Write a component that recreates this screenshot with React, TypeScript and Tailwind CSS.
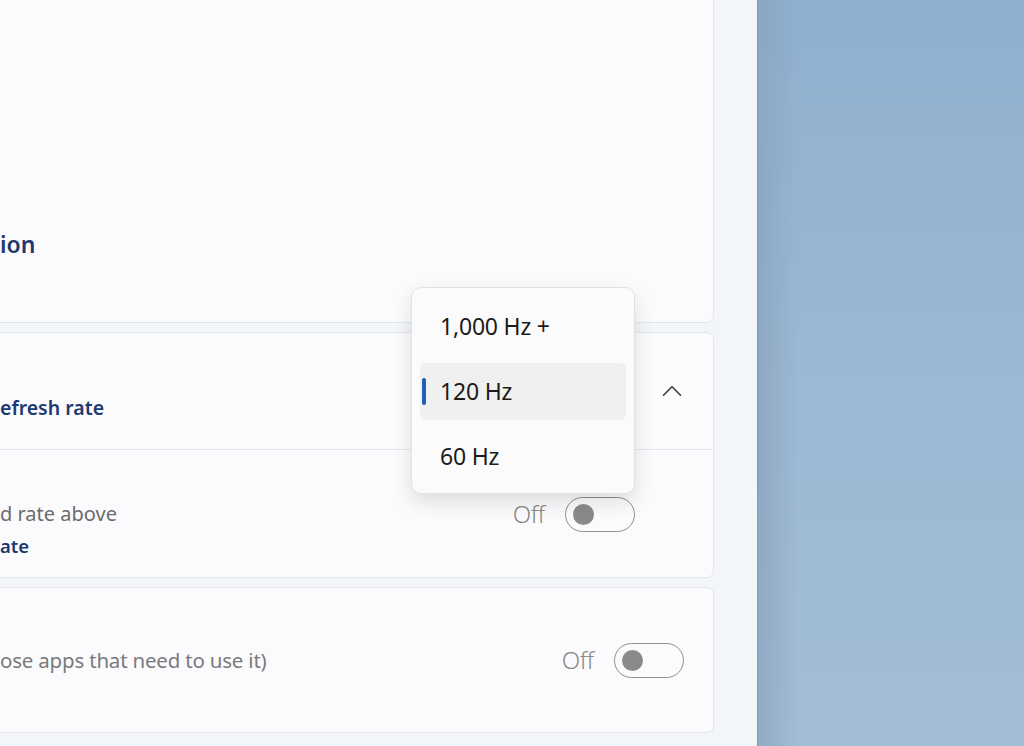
import { ChevronUp } from "lucide-react";

function Toggle() {
  return (
    <div className="w-[70px] h-[35px] rounded-full border-[1.5px] border-[#8f8f8f] bg-[#fbfbfb] flex items-center pl-[7px]">
      <div className="w-[21px] h-[21px] rounded-full bg-[#8a8a8a]" />
    </div>
  );
}

function OffSwitch() {
  return (
    <div className="flex items-center gap-[20px]">
      <span className="text-[24px] font-light text-[#8a8a8a] tracking-[-0.3px]">Off</span>
      <Toggle />
    </div>
  );
}

export default function App() {
  return (
    <div
      className="relative w-[1024px] h-[746px] overflow-hidden flex bg-[#f1f4f8]"
      style={{ fontFamily: '"Noto Sans", "Open Sans", sans-serif' }}
    >
      {/* settings window */}
      <div className="w-[757px] h-full flex flex-col gap-[9px] bg-[#f2f5f9]">
        <div className="w-[714px] h-[323px] shrink-0 bg-[#fbfbfd] border-r border-b border-[#e3e7ec] rounded-br-[7px] flex items-start pt-[226px]">
          <span className="text-[23px] font-semibold text-[#1d3a70] leading-[36px]">ion</span>
        </div>

        <div className="w-[714px] h-[246px] shrink-0 bg-[#fbfbfd] border-y border-r border-[#e3e7ec] rounded-r-[7px] flex flex-col">
          <div className="h-[117px] flex items-center justify-between border-b border-[#e3e7ec] pr-[24px]">
            <span className="text-[19.5px] font-semibold text-[#1d3a70] mt-[34px]">efresh rate</span>
            <ChevronUp className="w-[34px] h-[34px] text-[#3a3a3a]" strokeWidth={1.1} />
          </div>
          <div className="flex-1 flex items-start justify-between pr-[78px] pt-[48px]">
            <div className="flex flex-col">
              <span className="text-[20px] text-[#6b6b6b] leading-[32px]">d rate above</span>
              <span className="text-[18.5px] font-semibold text-[#1d3a70] leading-[32px]">ate</span>
            </div>
            <div className="-mt-[2px]">
              <OffSwitch />
            </div>
          </div>
        </div>

        <div className="w-[714px] h-[146px] shrink-0 bg-[#fbfbfd] border-y border-r border-[#e3e7ec] rounded-r-[7px] flex items-center justify-between pr-[29px]">
          <span className="text-[20.5px] text-[#7a7a7a] tracking-[-0.2px]">ose apps that need to use it)</span>
          <OffSwitch />
        </div>
      </div>

      {/* desktop wallpaper */}
      <div className="flex-1 h-full border-l border-[#8799ad] bg-gradient-to-b from-[#8fb0cf] via-[#9bb8d4] to-[#a3bdd6] relative">
        <div className="absolute inset-y-0 left-0 w-[40px] bg-gradient-to-r from-[#8aa2ba]/70 to-transparent" />
      </div>

      {/* dropdown */}
      <div className="absolute left-[411px] top-[287px] w-[224px] h-[207px] rounded-[10px] bg-[#fbfbfb] border border-[#e2e2e2] shadow-[0_8px_20px_rgba(0,0,0,0.12)] flex flex-col px-[8px] pt-[10px] pb-[6px] gap-[8px]">
        <div className="h-[57px] flex items-center pl-[20px] text-[23px] text-[#1b1b1b] tracking-[-0.2px]">1,000 Hz +</div>
        <div className="h-[57px] flex items-center relative bg-[#f0f0f0] rounded-[6px] pl-[20px] text-[23px] text-[#1b1b1b] tracking-[-0.2px]">
          <div className="absolute left-[2px] top-[15px] w-[4px] h-[27px] rounded-full bg-[#1f5fb8]" />
          120 Hz
        </div>
        <div className="h-[57px] flex items-center pl-[20px] text-[23px] text-[#1b1b1b] tracking-[-0.2px]">60 Hz</div>
      </div>
    </div>
  );
}
